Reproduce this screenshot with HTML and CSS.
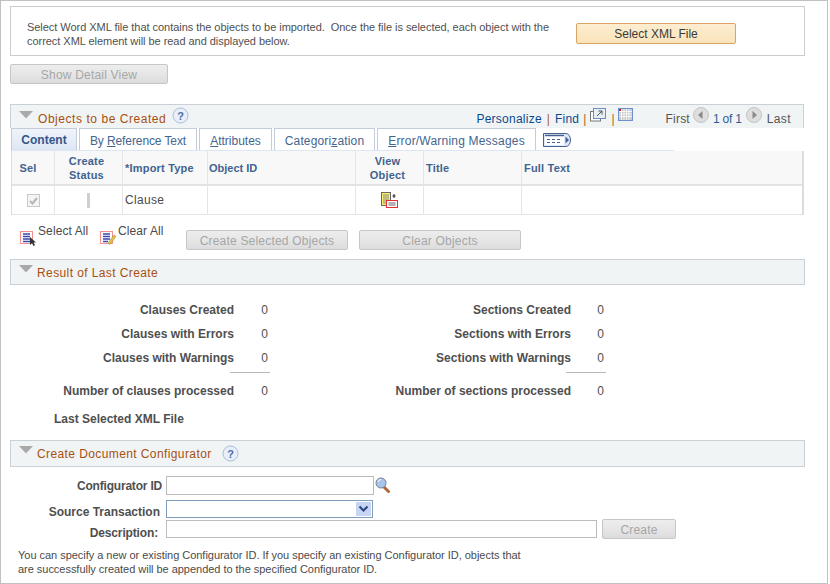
FILE: index.html
```html
<!DOCTYPE html>
<html lang="en">
<head>
<meta charset="utf-8">
<title>Import Objects</title>
<link rel="stylesheet" href="styles.css">
</head>
<body>
<div class="frame">
  <section class="intro">
    <p class="intro-text">Select Word XML file that contains the objects to be imported.&nbsp; Once the file is selected, each object with the correct XML element will be read and displayed below.</p>
    <button class="btn btn-primary btn-xml" type="button">Select XML File</button>
  </section>

  <button class="btn btn-detail" type="button" disabled>Show Detail View</button>

  <section class="grid-head">
    <svg class="tri" width="14" height="8" viewBox="0 0 14 8"><path d="M0 0h14L7 7.500z" fill="#a9a9a9"/></svg>
    <span class="bar-title">Objects to be Created</span>
    <svg class="help help-top" width="17" height="17" viewBox="0 0 17 17"><circle cx="8.500" cy="8.500" r="7.500" fill="#e9eff8" stroke="#a9bdd9"/><text x="8.500" y="13" class="help-q">?</text></svg>
    <div class="grid-tools">
      <a class="lnk">Personalize</a><span class="sep sep-1">|</span><a class="lnk">Find</a><span class="sep sep-a">|</span>
      <svg class="tool-pop" width="16" height="14" viewBox="0 0 16 14"><rect x="0.500" y="3.500" width="10" height="9.500" fill="#fff" stroke="#777"/><rect x="3.500" y="0.500" width="12" height="10" fill="#e6eef8" stroke="#6d8fc0"/><path d="M7 8l5-5M8.500 3H12v3.500" fill="none" stroke="#555"/></svg>
      <span class="sep sep-b">|</span>
      <svg class="tool-cal" width="15" height="13" viewBox="0 0 15 13"><rect x="0.500" y="0.500" width="14" height="12" fill="#c9c9c9" stroke="#6f8fd0"/><path d="M1 3.500h13M1 6h13M1 8.500h13M3.500 1v11M6 1v11M8.500 1v11M11 1v11" stroke="#fff" stroke-width="0.800"/><rect x="1" y="1" width="2" height="2" fill="#e02020"/></svg>
      <span class="pg pg-first">First</span>
      <svg class="nav-ic nav-prev" width="16" height="16" viewBox="0 0 16 16"><circle cx="8" cy="8" r="7.500" fill="#dedede" stroke="#c4c4c4"/><path d="M9.500 4v8L5 8z" fill="#8a8a8a"/></svg>
      <a class="lnk pg-count">1 of 1</a>
      <svg class="nav-ic" width="16" height="16" viewBox="0 0 16 16"><circle cx="8" cy="8" r="7.500" fill="#dedede" stroke="#c4c4c4"/><path d="M6.500 4v8L11 8z" fill="#8a8a8a"/></svg>
      <span class="pg pg-last">Last</span>
    </div>
  </section>

  <nav class="tabs">
    <span class="tab tab-active tab-content">Content</span>
    <span class="tab tab-ref">By <u>R</u>eference Text</span>
    <span class="tab tab-attr"><u>A</u>ttributes</span>
    <span class="tab tab-cat">Categori<u>z</u>ation</span>
    <span class="tab tab-err"><u>E</u>rror/Warning Messages</span>
    <svg class="tab-more" width="28" height="14" viewBox="0 0 28 14"><path d="M0.500 0.500H23a4.500 6.500 0 0 1 0 13H0.500z" fill="#dfe8f6" stroke="#47618f"/><rect x="2" y="2" width="19" height="10" fill="#fff"/><path d="M2 2.500h19" stroke="#47618f" stroke-width="1.500"/><path d="M4 6.500h3M9 6.500h3M14 6.500h3M4 9.500h3M9 9.500h3M14 9.500h3" stroke="#47618f"/><path d="M22.500 3.500v7l3.500-3.500z" fill="#47618f"/></svg>
  </nav>

  <table class="objects">
    <colgroup>
      <col class="c-sel"><col class="c-status"><col class="c-type"><col class="c-id"><col class="c-view"><col class="c-title"><col class="c-full">
    </colgroup>
    <thead>
      <tr>
        <th class="center th-sel">Sel</th>
        <th class="center">Create<br>Status</th>
        <th>*Import Type</th>
        <th class="th-id">Object ID</th>
        <th class="center">View<br>Object</th>
        <th>Title</th>
        <th>Full Text</th>
      </tr>
    </thead>
    <tbody>
      <tr>
        <td class="center"><span class="check"><svg width="9" height="8" viewBox="0 0 9 8"><path d="M1 4l2.500 2.500L8 1" fill="none" stroke="#b5b5b5" stroke-width="2"/></svg></span></td>
        <td class="center"><span class="status-bar"></span></td>
        <td class="td-type">Clause</td>
        <td></td>
        <td class="center"><svg class="view-ic" width="17" height="16" viewBox="0 0 17 16"><rect x="0.500" y="0.500" width="9" height="13" fill="#f8ef70" stroke="#666"/><path d="M2 3h6M2 5h6M2 7h6M2 9h3M2 11h3" stroke="#888"/><path d="M13 2v3M11.500 4h3M12.500 5.500h1" fill="none" stroke="#222"/><rect x="5.500" y="8.500" width="11" height="7" fill="#fff" stroke="#e03030"/><path d="M7.500 11h7M7.500 13h7" stroke="#666"/></svg></td>
        <td></td>
        <td></td>
      </tr>
    </tbody>
  </table>

  <div class="actions">
    <svg class="sel-ic" width="16" height="16" viewBox="0 0 16 16"><rect x="0.500" y="1.500" width="12" height="12" fill="#fff" stroke="#e02020" stroke-dasharray="1 1"/><path d="M3 4h7M3 6.500h7M3 9h7M3 11.500h7" stroke="#3b46b5" stroke-width="1.500"/><path d="M10 7v8l2-2 1.500 3 1.500-1-1.500-2.500H16z" fill="#333"/></svg>
    <span class="act-text act-sel">Select All</span>
    <svg class="sel-ic" width="16" height="16" viewBox="0 0 16 16"><rect x="0.500" y="1.500" width="12" height="12" fill="#fff" stroke="#e02020" stroke-dasharray="1 1"/><path d="M3 4h7M3 6.500h7M3 9h7M3 11.500h5" stroke="#3b46b5" stroke-width="1.500"/><path d="M8 13l6-8 2 1.500-6 8z" fill="#e8c840" stroke="#8a7a30" stroke-width="0.500"/></svg>
    <span class="act-text act-clear">Clear All</span>
    <button class="btn btn-create-sel" type="button" disabled>Create Selected Objects</button>
    <button class="btn btn-clear" type="button" disabled>Clear Objects</button>
  </div>

  <section class="bar bar-result">
    <svg class="tri" width="14" height="8" viewBox="0 0 14 8"><path d="M0 0h14L7 7.500z" fill="#a9a9a9"/></svg>
    <span class="bar-title">Result of Last Create</span>
  </section>

  <section class="stats">
    <div class="st-row">
      <span class="st-label st-l">Clauses Created</span><span class="st-val st-val-l">0</span>
      <span class="st-label st-r">Sections Created</span><span class="st-val">0</span>
    </div>
    <div class="st-row">
      <span class="st-label st-l">Clauses with Errors</span><span class="st-val st-val-l">0</span>
      <span class="st-label st-r">Sections with Errors</span><span class="st-val">0</span>
    </div>
    <div class="st-row st-sum">
      <span class="st-label st-l">Clauses with Warnings</span><span class="st-val st-val-l">0</span>
      <span class="st-label st-r">Sections with Warnings</span><span class="st-val">0</span>
    </div>
    <div class="st-row st-total">
      <span class="st-label st-l">Number of clauses processed</span><span class="st-val st-val-l">0</span>
      <span class="st-label st-r">Number of sections processed</span><span class="st-val">0</span>
    </div>
    <div class="st-last">Last Selected XML File</div>
  </section>

  <section class="bar bar-config">
    <svg class="tri" width="14" height="8" viewBox="0 0 14 8"><path d="M0 0h14L7 7.500z" fill="#a9a9a9"/></svg>
    <span class="bar-title bar-title-config">Create Document Configurator</span>
    <svg class="help help-config" width="17" height="17" viewBox="0 0 17 17"><circle cx="8.500" cy="8.500" r="7.500" fill="#e9eff8" stroke="#a9bdd9"/><text x="8.500" y="13" class="help-q">?</text></svg>
  </section>

  <section class="form">
    <div class="f-row f-id">
      <label class="f-label f-label-id">Configurator ID</label>
      <span class="input input-id"></span>
      <svg class="lookup" width="15" height="16" viewBox="0 0 15 16"><path d="M9 10l4.500 4.500" stroke="#b4683a" stroke-width="3" stroke-linecap="round"/><circle cx="6" cy="6" r="5" fill="#a8c6ec" stroke="#6f8296"/><path d="M3 5a3 3 0 0 1 3-2.500" stroke="#fff" fill="none"/></svg>
    </div>
    <div class="f-row f-src">
      <label class="f-label f-label-src">Source Transaction</label>
      <span class="select"><span class="select-btn"><svg width="11" height="8" viewBox="0 0 11 8"><path d="M1.500 1.500l4 4 4-4" fill="none" stroke="#2d4a80" stroke-width="2.200"/></svg></span></span>
    </div>
    <div class="f-row f-desc">
      <label class="f-label f-label-desc">Description:</label>
      <span class="input input-desc"></span>
      <button class="btn btn-create" type="button" disabled>Create</button>
    </div>
    <p class="note">You can specify a new or existing Configurator ID. If you specify an existing Configurator ID, objects that are successfully created will be appended to the specified Configurator ID.</p>
  </section>
</div>
</body>
</html>
```

FILE: styles.css
```css
* { box-sizing: border-box; }
html, body { margin: 0; padding: 0; background: #fff; }
body { width: 830px; height: 584px; overflow: hidden; font-family: "Liberation Sans", Arial, sans-serif; font-size: 12px; color: #4b4b4b; }

.frame { width: 828px; height: 584px; border: 1px solid #c1c1c1; padding: 5px 0 0 9px; }

/* Intro */
.intro { width: 795px; height: 50px; border: 1px solid #c9cdd2; display: flex; padding: 13px 0 0 16px; }
.intro-text { margin: 0; width: 533px; font-size: 11px; line-height: 14px; letter-spacing: -0.04px; color: #505050; }
.btn-xml { margin: 3px 0 0 16px; width: 160px; height: 21px; }

/* Buttons */
.btn { font: 12px "Liberation Sans", Arial, sans-serif; display: block; padding: 1px 0 0; border: 1px solid #c6c6c6; border-radius: 2px; background: linear-gradient(#ededed, #e6e6e6 50%, #dcdcdc); color: #a6a6a6; letter-spacing: 0.2px; }
.btn-primary { border-color: #dca365; background: linear-gradient(#fdeed3, #fbe8c4 50%, #f9e3bb); color: #3a3a3a; letter-spacing: 0; }
.btn-detail { width: 158px; height: 20px; margin-top: 8px; }

/* Section bars */
.grid-head, .bar { display: flex; align-items: flex-start; background: #f0f4f5; border: 1px solid #c9d0d6; }
.grid-head { width: 794px; height: 24px; margin-top: 20px; border-bottom: 0; }
.tri { flex: none; margin: 6px 0 0 8px; }
.bar-title { color: #a8500f; font-size: 12px; letter-spacing: 0.4px; margin: 6px 0 0 4px; line-height: 14px; }
.grid-head .bar-title { margin: 7px 0 0 5px; letter-spacing: 0.55px; }
.help-top { margin: 2px 0 0 6px; flex: none; }
.help-q { font: bold 11px "Liberation Sans", Arial, sans-serif; fill: #4a6ea8; text-anchor: middle; }
.grid-tools { margin-left: auto; display: flex; align-items: flex-start; height: 23px; padding-right: 12px; line-height: 14px; }
.lnk { color: #0a4a8f; letter-spacing: 0.25px; margin-top: 7px; }
.sep { color: #b0601c; margin-top: 7px; }
.sep-1 { margin-left: 5px; margin-right: 5px; }
.sep-a { margin-left: 4px; margin-right: 4px; }
.sep-b { margin-left: 5px; margin-right: 3px; }
.tool-pop { margin-top: 3px; flex: none; }
.tool-cal { margin-top: 3px; flex: none; }
.pg { margin-top: 7px; letter-spacing: 0.2px; color: #555; }
.pg-first { margin-left: 33px; }
.pg-last { letter-spacing: 0.4px; }
.nav-ic { flex: none; margin: 2px 5px 0 4px; }
.nav-prev { margin-left: 3px; margin-right: 4px; }
.pg-count { color: #2f5d96; letter-spacing: -0.2px; }

/* Tabs */
.tabs { width: 794px; height: 23px; display: flex; gap: 2px; align-items: flex-start; position: relative; }
.tabs::after { content: ""; position: absolute; left: 1px; top: 22px; width: 663px; height: 1px; background: #dde6f3; }
.tab { height: 22px; padding-top: 5px; border: 1px solid #c3cdd9; border-bottom: 0; text-align: center; color: #45658d; letter-spacing: 0.15px; line-height: 14px; background: #fff; }
.tab-active { background: linear-gradient(#f0f4fa, #dde7f5); font-weight: bold; color: #33568a; padding-top: 4px; margin-left: 1px; letter-spacing: 0; }
.tab-content { width: 66px; }
.tab-ref { width: 118px; letter-spacing: -0.1px; }
.tab-attr { width: 73px; letter-spacing: 0; }
.tab-cat { width: 101px; }
.tab-err { width: 159px; letter-spacing: 0.2px; }
.tab-more { margin: 5px 0 0 5px; flex: none; }

/* Table */
.objects { width: 793px; margin-left: 1px; border-collapse: separate; border-spacing: 0; table-layout: fixed; border-right: 2px solid #dcdcdc; border-bottom: 1px solid #e3e3e3; border-left: 1px solid #dcdcdc; }
.c-sel { width: 43px; } .c-status { width: 68px; } .c-type { width: 85px; } .c-id { width: 148px; } .c-view { width: 68px; } .c-title { width: 98px; }
.objects th { background: #f8f8f8; color: #41638f; font-size: 11px; font-weight: bold; letter-spacing: 0.2px; height: 35px; padding: 0 2px; text-align: left; line-height: 14px; border-right: 1px solid #e6e6e6; border-bottom: 2px solid #e3e3e3; }
.objects td { height: 28px; padding: 0 2px; border-right: 1px solid #e6e6e6; vertical-align: middle; }
.objects th:last-child, .objects td:last-child { border-right: 0; }
.objects th.center, .objects td.center { text-align: center; }
.objects th.center { padding-right: 6px; }
.objects th.th-sel { padding-right: 12px; }
.objects th.th-id { padding-left: 1px; letter-spacing: 0; }
.td-type { letter-spacing: 0.3px; padding-left: 3px; }
.check { display: inline-flex; align-items: center; justify-content: center; width: 13px; height: 13px; border: 1px solid #c8c8c8; background: #f4f4f4; vertical-align: middle; }
.status-bar { display: inline-block; width: 3px; height: 15px; background: #cfcfcf; vertical-align: middle; }
.view-ic { vertical-align: middle; }

/* Actions */
.actions { display: flex; align-items: flex-start; height: 43px; padding: 0 0 0 10px; }
.sel-ic { flex: none; margin-top: 15px; }
.act-text { letter-spacing: 0.1px; line-height: 14px; }
.act-sel { margin: 9px 0 0 2px; width: 62px; }
.act-clear { margin: 9px 0 0 2px; width: 68px; }
.btn-create-sel { width: 162px; height: 20px; margin-top: 15px; }
.btn-clear { width: 162px; height: 20px; margin: 15px 0 0 11px; }

/* Result */
.bar { width: 795px; height: 26px; }
.bar-result { margin-top: 1px; }
.bar .tri { margin-top: 5px; margin-left: 8px; }
.stats { height: 155px; padding-top: 13px; }
.st-row { display: flex; height: 24px; line-height: 24px; align-items: flex-start; }
.st-label { font-weight: bold; text-align: right; color: #4f4f4f; }
.st-l { width: 224px; }
.st-r { width: 303px; }
.st-val { width: 33px; text-align: right; color: #4f4f4f; }
.st-val-l { width: 34px; }
.st-sum { height: 33px; position: relative; }
.st-sum::before, .st-sum::after { content: ""; position: absolute; top: 26px; width: 40px; height: 1px; background: #b9b9b9; }
.st-sum::before { left: 220px; }
.st-sum::after { left: 556px; }
.st-last { font-weight: bold; color: #4f4f4f; margin: 0 0 0 44px; line-height: 32px; }

/* Form */
.bar-config { height: 27px; }
.bar-title-config { letter-spacing: 0.4px; }
.help-config { margin: 4px 0 0 10px; flex: none; }
.f-row { display: flex; align-items: center; }
.f-label { font-weight: bold; text-align: right; color: #4f4f4f; }
.f-id { height: 20px; margin-top: 8px; }
.f-src { height: 18px; margin-top: 5px; }
.f-desc { height: 20px; margin-top: 1px; }
.f-label-id { width: 152px; margin: 2px 4px 0 0; letter-spacing: -0.2px; }
.f-label-src { width: 150px; margin: 6px 6px 0 0; }
.f-label-desc { width: 148px; margin: 8px 8px 0 0; letter-spacing: -0.15px; }
.input { display: block; height: 19px; border: 1px solid #bcbcbc; background: #fff; }
.input-id { width: 208px; }
.input-desc { width: 431px; height: 18px; }
.lookup { margin-left: 1px; flex: none; }
.select { display: flex; justify-content: flex-end; width: 207px; height: 18px; border: 1px solid #7f9db9; padding: 1px; background: #fff; }
.select-btn { width: 15px; display: flex; align-items: center; justify-content: center; background: #c5d5f2; }
.btn-create { width: 74px; height: 20px; margin-left: 5px; }
.note { margin: 9px 0 0 8px; width: 510px; line-height: 14px; font-size: 11px; letter-spacing: -0.03px; color: #4b4b4b; }
```
